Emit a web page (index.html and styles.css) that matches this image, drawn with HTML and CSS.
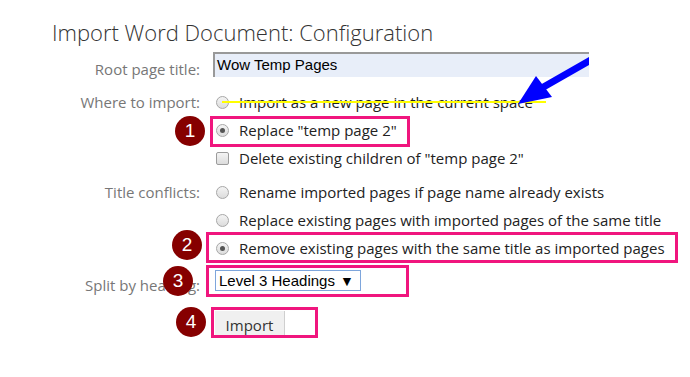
FILE: index.html
```html
<!DOCTYPE html>
<html lang="en">
<head>
<meta charset="UTF-8">
<meta name="viewport" content="width=device-width, initial-scale=1.0">
<title>Import Word Document: Configuration</title>
<link rel="stylesheet" href="styles.css">
</head>
<body>

<div class="page">
    <h1>Import Word Document: Configuration</h1>

    <div class="form">
        <div class="row row-root">
            <label class="lbl">Root page title:</label>
            <div class="ctl">
                <div class="text-input">Wow Temp Pages</div>
            </div>
        </div>

        <div class="group group-where">
            <div class="row">
                <label class="lbl">Where to import:</label>
                <div class="ctl"><span class="radio"></span>Import as a new page in the current space</div>
            </div>
            <div class="row">
                <span class="lbl"></span>
                <div class="ctl"><span class="radio checked"></span>Replace "temp page 2"</div>
            </div>
            <div class="row">
                <span class="lbl"></span>
                <div class="ctl"><span class="check"></span>Delete existing children of "temp page 2"</div>
            </div>
        </div>

        <div class="group group-conflicts">
            <div class="row">
                <label class="lbl">Title conflicts:</label>
                <div class="ctl"><span class="radio"></span>Rename imported pages if page name already exists</div>
            </div>
            <div class="row">
                <span class="lbl"></span>
                <div class="ctl"><span class="radio"></span>Replace existing pages with imported pages of the same title</div>
            </div>
            <div class="row">
                <span class="lbl"></span>
                <div class="ctl"><span class="radio checked"></span>Remove existing pages with the same title as imported pages</div>
            </div>
        </div>

        <div class="row row-split">
            <label class="lbl">Split by heading:</label>
            <div class="ctl">
                <div class="select">Level 3 Headings <span class="caret">&#9660;</span></div>
            </div>
        </div>

        <div class="row row-button">
            <span class="lbl"></span>
            <div class="ctl">
                <button class="btn">Import</button>
            </div>
        </div>
    </div>

    <!-- annotations drawn over the screenshot -->
    <svg class="marks" width="690" height="377" viewBox="0 0 690 377">
        <line x1="222" y1="102" x2="546" y2="102" stroke="#ffff00" stroke-width="2"/>
        <line x1="596" y1="57" x2="540" y2="89" stroke="#0000ff" stroke-width="7"/>
        <polygon points="518,104 536,76 552,97" fill="#0000ff"/>
        <rect x="589" y="40" width="101" height="40" fill="#fff"/>
    </svg>

    <div class="box box-1"></div>
    <div class="box box-2"></div>
    <div class="box box-3"></div>
    <div class="box box-4"></div>

    <span class="badge badge-1">1</span>
    <span class="badge badge-2">2</span>
    <span class="badge badge-3">3</span>
    <span class="badge badge-4">4</span>
</div>

</body>
</html>
```

FILE: styles.css
```css
body {
    margin: 0;
    background: #fff;
    font-family: "Open Sans", "Noto Sans", sans-serif;
}
.page {
    position: relative;
    width: 690px;
    height: 377px;
    overflow: hidden;
}
h1 {
    margin: 0;
    padding: 20px 0 0 52px;
    font-size: 22px;
    font-weight: 300;
    line-height: 25px;
    color: #333;
}
.form {
    padding-left: 52px;
}
.row {
    display: flex;
    align-items: center;
    height: 28px;
}
.lbl {
    width: 148px;
    margin-right: 13px;
    text-align: right;
    font-size: 15px;
    color: #777;
    flex-shrink: 0;
}
.ctl {
    display: flex;
    align-items: center;
    font-size: 15px;
    color: #222;
    white-space: nowrap;
}
.row-root {
    margin-top: 7px;
    height: 25px;
    align-items: flex-start;
}
.row-root .lbl {
    padding-top: 7px;
}
.text-input {
    width: 374px;
    height: 23px;
    border-top: 2px solid #999;
    border-left: 2px solid #999;
    background: #e8eef9;
    font-family: "Liberation Sans", Arial, sans-serif;
    font-size: 15px;
    line-height: 22px;
    padding-left: 2px;
    color: #000;
}
.group-where {
    margin-top: 11px;
}
.group-conflicts {
    margin-top: 6px;
}
.radio, .check {
    display: inline-block;
    box-sizing: border-box;
    width: 13px;
    height: 13px;
    margin: 0 10px 0 3px;
    border: 1px solid #a7a7a7;
    background: linear-gradient(#f4f4f4, #dcdcdc);
    position: relative;
}
.radio {
    border-radius: 50%;
}
.check {
    border-radius: 2px;
    border-color: #9c9c9c;
}
.radio.checked::after {
    content: "";
    position: absolute;
    left: 3px;
    top: 3px;
    width: 5px;
    height: 5px;
    border-radius: 50%;
    background: #555;
}
.row-split {
    margin-top: 8px;
    height: 21px;
}
.row-split .lbl {
    padding-top: 9px;
}
.select {
    box-sizing: border-box;
    width: 146px;
    height: 21px;
    margin-left: 2px;
    border: 1px solid #7ea6dc;
    padding-left: 3px;
    font-family: "Liberation Sans", Arial, sans-serif;
    font-size: 15px;
    line-height: 19px;
    color: #000;
}
.caret {
    font-size: 14px;
    margin-left: 1px;
}
.row-button {
    margin-top: 20px;
    height: 27px;
}
.btn {
    width: 70px;
    height: 27px;
    margin-left: 2px;
    padding: 0;
    border: none;
    border-right: 1px solid #cfcfcf;
    background: #f0f0f0;
    font-family: "Open Sans", sans-serif;
    font-size: 15px;
    color: #333;
}
.marks {
    position: absolute;
    left: 0;
    top: 0;
}
.box {
    position: absolute;
    box-sizing: border-box;
    border: 3px solid #f0167e;
}
.box-1 { left: 210px; top: 116px; width: 200px; height: 31px; }
.box-2 { left: 206px; top: 232px; width: 472px; height: 31px; }
.box-3 { left: 206px; top: 265px; width: 203px; height: 32px; }
.box-4 { left: 211px; top: 307px; width: 107px; height: 31px; }
.badge {
    position: absolute;
    width: 30px;
    height: 30px;
    border-radius: 50%;
    background: #860000;
    color: #fff;
    font-family: "Liberation Sans", Arial, sans-serif;
    font-size: 19px;
    line-height: 30px;
    text-align: center;
}
.badge-1 { left: 175px; top: 116px; }
.badge-2 { left: 172px; top: 230px; }
.badge-3 { left: 163px; top: 266px; }
.badge-4 { left: 176px; top: 307px; }
```
